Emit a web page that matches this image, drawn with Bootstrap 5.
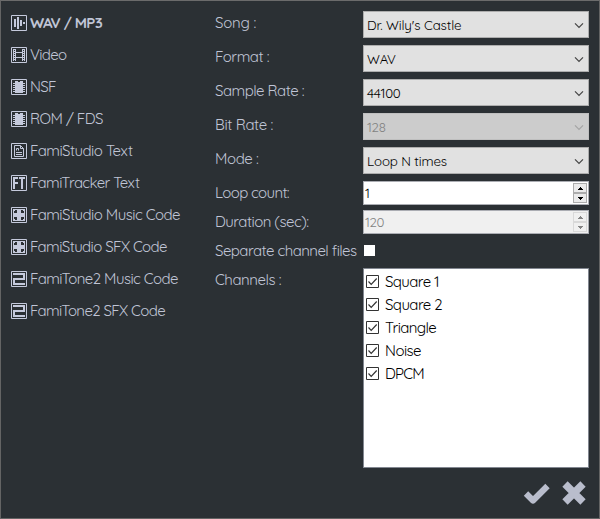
<!DOCTYPE html>
<html lang="en">
<head>
<meta charset="utf-8">
<meta name="viewport" content="width=device-width, initial-scale=1">
<title>Export Songs</title>
<link href="https://cdn.jsdelivr.net/npm/bootstrap@5.3.0/dist/css/bootstrap.min.css" rel="stylesheet">
<style>
body{margin:0;background:#2b3034;font-family:Quicksand,Lato,sans-serif;font-size:15px;font-weight:400;line-height:20px;color:#c0c5d6;overflow:hidden}
.dialog{width:600px;height:519px;border:1px solid #646464;border-top-color:#6b6b6b}
[data-w]{white-space:nowrap;display:inline-block}
.formats{width:214px;padding:6px 0 0 10px}
.fmt{height:32px;gap:3px;background:none;border:0;color:inherit;padding:0;text-align:left;font-weight:400}
.fmt svg{width:16px;height:16px;flex:none}
.fmt.current{font-weight:700}
.options{width:374px;padding-top:10px}
.opt{display:flex;align-items:flex-start}
.split-row{height:29px}
.lbl{width:148px;flex:none;padding-top:2px}
.combo{width:226px;height:27px;margin-bottom:7px;background:#e1e1e1;border:1px solid #adadad;color:#000;font-size:13.3px;padding:0 4px 0 3px}
.combo.off{background:#ccc;border-color:#bfbfbf;color:#838383}
.combo svg{width:10px;height:7px;margin-top:1px;color:#444}
.combo.off svg{color:#a5a5a5}
.num{width:226px;height:24px;margin-bottom:5px;background:#fff;border:1px solid #abadb3;color:#000;font-size:13.3px;padding:1px}
.num.off{background:#f0f0f0;color:#838383}
.spin{width:14px;height:20px;background:#f0f0f0}
.spin i{display:flex;height:10px;border:1px solid #acacac;background:#ebebeb;align-items:center;justify-content:center}
.spin svg{width:5px;height:3px}
.off .spin i{border-color:#d9d9d9;background:#f0f0f0}
.single{width:11px;height:11px;background:#fff;margin:6px 0 0 1px}
.channels{width:226px;height:200px;background:#fff;border:1px solid #828790;color:#000;padding:1px 2px}
.ch{height:23px;gap:6px}
.ch svg{width:13px;height:13px;flex:none}
.ch span{padding-top:1px}
.actions{padding:12px 11px 0 0;gap:9px}
</style>
</head>
<body>
<svg class="d-none" xmlns="http://www.w3.org/2000/svg">
  <symbol id="wav" viewBox="0 0 16 16"><path d="M.5.5h15v15H.5z" fill="none" stroke="#c5cadc"/><path fill="#c5cadc" d="M3 4h2v8H3zM6 2h2v12H6zM9 5h2v6H9zM12 7h2v2h-2z"/></symbol>
  <symbol id="video" viewBox="0 0 16 16"><path d="M.5.5h15v15H.5z" fill="none" stroke="#c5cadc"/><path fill="#c5cadc" d="M2 2h3v12H2zM11 2h3v12h-3zM5 5h6v1H5zM5 10h6v1H5z"/><path stroke="#2b3034" stroke-dasharray="1 1" d="M3.500 3v11M12.500 3v11"/></symbol>
  <symbol id="chip" viewBox="0 0 16 16"><path d="M.5.5h15v15H.5z" fill="none" stroke="#c5cadc"/><path fill="#c5cadc" d="M4 2h3v1h2V2h3v12H4zM2 4h12v1H2zM2 6h12v1H2zM2 8h12v1H2zM2 10h12v1H2zM2 12h12v1H2z"/></symbol>
  <symbol id="doc" viewBox="0 0 16 16"><path d="M.5.5h15v15H.5z" fill="none" stroke="#c5cadc"/><path fill="none" stroke="#c5cadc" d="M3.500 2.500h6l3 3v8h-9zM9.500 2.500v3h3M5 9.500h6M5 11.500h6M5.500 7.500v-2h2v2"/></symbol>
  <symbol id="ft" viewBox="0 0 16 16"><path d="M.5.5h15v15H.5z" fill="none" stroke="#c5cadc"/><path fill="#c5cadc" d="M2 2h5v2H4v3h3v2H4v5H2zM8 2h6v2h-2v10h-2V4H8z"/></symbol>
  <symbol id="code" viewBox="0 0 16 16"><path d="M.5.5h15v15H.5z" fill="none" stroke="#c5cadc"/><path fill="#c5cadc" d="M2 2h12v12H2z"/><path fill="#2b3034" d="M4 3h2v3H3V4h1zM10 3h2v1h1v2h-3zM3 10h3v3H4v-1H3zM10 10h3v2h-1v1h-2z"/></symbol>
  <symbol id="two" viewBox="0 0 16 16"><path d="M.5.5h15v15H.5z" fill="none" stroke="#c5cadc"/><path fill="none" stroke="#c5cadc" stroke-width="2" d="M2 3h11v5H3v5h11"/></symbol>
  <symbol id="down" viewBox="0 0 10 7"><path d="M1 1.300l4 4 4-4" fill="none" stroke="currentColor" stroke-width="1.200"/></symbol>
  <symbol id="tick" viewBox="0 0 13 13"><path d="M.5.5h12v12H.5z" fill="#fff" stroke="#333"/><path d="M2.500 6.500l2.700 2.800L10.700 3.500" fill="none" stroke="#333" stroke-width="1.200"/></symbol>
  <symbol id="up5" viewBox="0 0 5 3"><path d="M2 0h1v1h1v1h1v1H0V2h1V1h1z" fill="currentColor"/></symbol>
  <symbol id="dn5" viewBox="0 0 5 3"><path d="M0 0h5v1H4v1H3v1H2V2H1V1H0z" fill="currentColor"/></symbol>
</svg>
<main class="dialog">
  <div class="d-flex">
    <nav class="formats d-flex flex-column">
      <button class="fmt current d-flex align-items-center"><svg><use href="#wav"/></svg><span data-w="72">WAV / MP3</span></button>
      <button class="fmt d-flex align-items-center"><svg><use href="#video"/></svg><span data-w="36.500">Video</span></button>
      <button class="fmt d-flex align-items-center"><svg><use href="#chip"/></svg><span data-w="26">NSF</span></button>
      <button class="fmt d-flex align-items-center"><svg><use href="#chip"/></svg><span data-w="73">ROM / FDS</span></button>
      <button class="fmt d-flex align-items-center"><svg><use href="#doc"/></svg><span data-w="102.500">FamiStudio Text</span></button>
      <button class="fmt d-flex align-items-center"><svg><use href="#ft"/></svg><span data-w="109.500">FamiTracker Text</span></button>
      <button class="fmt d-flex align-items-center"><svg><use href="#code"/></svg><span data-w="150">FamiStudio Music Code</span></button>
      <button class="fmt d-flex align-items-center"><svg><use href="#code"/></svg><span data-w="137">FamiStudio SFX Code</span></button>
      <button class="fmt d-flex align-items-center"><svg><use href="#two"/></svg><span data-w="148">FamiTone2 Music Code</span></button>
      <button class="fmt d-flex align-items-center"><svg><use href="#two"/></svg><span data-w="135">FamiTone2 SFX Code</span></button>
    </nav>
    <section class="options">
      <div class="opt"><div class="lbl"><span data-w="41">Song :</span></div><div class="combo d-flex align-items-center justify-content-between"><span data-w="94.500">Dr. Wily's Castle</span><svg><use href="#down"/></svg></div></div>
      <div class="opt"><div class="lbl"><span data-w="54">Format :</span></div><div class="combo d-flex align-items-center justify-content-between"><span data-w="29">WAV</span><svg><use href="#down"/></svg></div></div>
      <div class="opt"><div class="lbl"><span data-w="89">Sample Rate :</span></div><div class="combo d-flex align-items-center justify-content-between"><span data-w="33.500">44100</span><svg><use href="#down"/></svg></div></div>
      <div class="opt"><div class="lbl"><span data-w="58">Bit Rate :</span></div><div class="combo off d-flex align-items-center justify-content-between"><span data-w="18.500">128</span><svg><use href="#down"/></svg></div></div>
      <div class="opt"><div class="lbl"><span data-w="43.500">Mode :</span></div><div class="combo d-flex align-items-center justify-content-between"><span data-w="80">Loop N times</span><svg><use href="#down"/></svg></div></div>
      <div class="opt"><div class="lbl"><span data-w="74">Loop count:</span></div><div class="num d-flex align-items-center justify-content-between"><span>1</span><div class="spin"><i><svg><use href="#up5"/></svg></i><i><svg><use href="#dn5"/></svg></i></div></div></div>
      <div class="opt"><div class="lbl"><span data-w="93.500">Duration (sec):</span></div><div class="num off d-flex align-items-center justify-content-between"><span data-w="19">120</span><div class="spin"><i><svg><use href="#up5"/></svg></i><i><svg><use href="#dn5"/></svg></i></div></div></div>
      <div class="opt split-row"><div class="lbl"><span data-w="141.500">Separate channel files</span></div><div class="single"></div></div>
      <div class="opt"><div class="lbl"><span data-w="66">Channels :</span></div>
        <div class="channels">
          <div class="ch d-flex align-items-center"><svg><use href="#tick"/></svg><span data-w="54">Square 1</span></div>
          <div class="ch d-flex align-items-center"><svg><use href="#tick"/></svg><span data-w="57">Square 2</span></div>
          <div class="ch d-flex align-items-center"><svg><use href="#tick"/></svg><span data-w="51">Triangle</span></div>
          <div class="ch d-flex align-items-center"><svg><use href="#tick"/></svg><span data-w="36">Noise</span></div>
          <div class="ch d-flex align-items-center"><svg><use href="#tick"/></svg><span data-w="39">DPCM</span></div>
        </div>
      </div>
    </section>
  </div>
  <div class="actions d-flex justify-content-end">
    <svg width="30" height="26" viewBox="0 0 30 26"><path d="M4 13.500l7 7L25.500 6" fill="none" stroke="#b9bdcc" stroke-width="6.200" stroke-linejoin="round"/></svg>
    <svg width="27" height="26" viewBox="0 0 27 26"><path d="M4 4l18 18M22 4l-18 18" fill="none" stroke="#b9bdcc" stroke-width="7.500"/></svg>
  </div>
</main>
<script src="https://cdn.jsdelivr.net/npm/bootstrap@5.3.0/dist/js/bootstrap.bundle.min.js"></script>
<script>
// Track each caption so that it fills its nominal width.
document.querySelectorAll('[data-w]').forEach(function (el) {
  var gap = (el.dataset.w - el.getBoundingClientRect().width) / el.textContent.length;
  el.style.letterSpacing = gap.toFixed(3) + 'px';
});
</script>
</body>
</html>
